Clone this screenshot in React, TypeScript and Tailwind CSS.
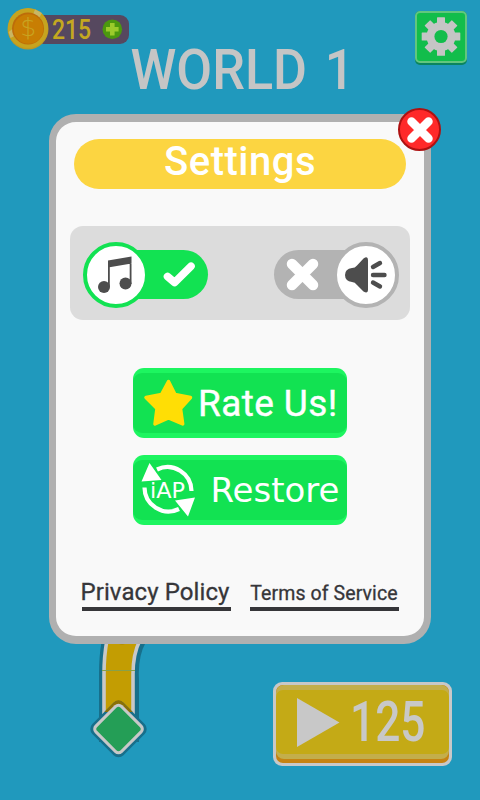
import React from "react";

const din = "font-['Roboto','Liberation_Sans',sans-serif]";

function CoinCounter() {
  return (
    <div className="relative ml-[30px] mt-[15px] flex h-[29px] w-[99px] items-center rounded-r-[9px] bg-[#56485f]">
      <svg className="absolute -left-[23px] -top-[8px]" width="43" height="44" viewBox="0 0 43 44">
        <circle cx="21" cy="22" r="20.5" fill="#bd9a24" />
        <circle cx="21" cy="21" r="20" fill="#c6a41f" />
        <path d="M1.6 25 L3.500 31 L11 27 L8 20Z M28 2.500 L35 6 L30 14 L25 10Z" fill="#c9b663" />
        <circle cx="21" cy="21.500" r="16" fill="#bd6c0a" />
        <circle cx="21.500" cy="22" r="14.800" fill="#c87e03" />
        <text x="21.300" y="29" textAnchor="middle" fontFamily="DejaVu Sans" fontSize="25" className="font-light" fill="#c9a421">$</text>
      </svg>
      <span className={`${din} ml-[22px] w-[38.500px] origin-left scale-x-[0.82] whitespace-nowrap text-[28px] font-medium leading-none text-[#c4a820]`}>215</span>
      <svg className="absolute left-[72px] top-[4px]" width="21" height="21" viewBox="0 0 21 21">
        <circle cx="10.300" cy="10.300" r="9.800" fill="#4b980f" />
        <path d="M8 4h4.600v4h4v4.600h-4v4H8v-4H4V8h4z" fill="#9bcb2b" />
      </svg>
    </div>
  );
}

function GearButton() {
  return (
    <button className="mr-[13px] mt-[11px] flex h-[54px] w-[52px] justify-center rounded-[5px] bg-[#0b855e]">
      <span className="flex h-[52px] w-[52px] items-center justify-center rounded-[5px] border-2 border-[#62c67e] bg-[#12bd4b]">
        <svg width="40" height="40" viewBox="-20 -19.500 40 40">
          <g fill="#c5c5c5">
            {[0, 45, 90, 135].map((a) => (
              <rect key={a} x="-4" y="-19.300" width="8" height="38.600" rx="0.500" transform={`rotate(${a})`} />
            ))}
            <circle r="14.500" />
          </g>
          <circle r="6.600" fill="#12bd4b" />
        </svg>
      </span>
    </button>
  );
}

function Road() {
  return (
    <svg width="80" height="130" viewBox="0 0 80 130">
      <path d="M22.500 102 V34 Q22.500 16 25 2 M55.500 102 V40 Q54 16 63 0" stroke="#176f8b" strokeWidth="7" fill="none" />
      <path d="M24 102 V34 Q24 16 27 0 L60 0 Q53 14 53 34 V102Z" fill="#c39d02" />
      <path d="M24 102 V34 Q24 16 27 0 M53 102 V34 Q53 14 60 0" stroke="#c8c8c8" strokeWidth="3.600" fill="none" />
      <path d="M34 0 Q42 9 50 0" fill="#a48204" />
      <path d="M22 30.500 H55" stroke="#87a04b" strokeWidth="1" />
      <g transform="translate(38.500 89) rotate(45)">
        <rect x="-22" y="-22" width="44" height="44" rx="7" fill="#176f8b" />
        <path d="M-22 -2 V-15 Q-22 -22 -15 -22 H-2Z" fill="#8b7007" />
        <rect x="-19.500" y="-19.500" width="39" height="39" rx="5.500" fill="#c8c8c8" />
        <rect x="-16.500" y="-16.500" width="33" height="33" rx="3" fill="#249e56" />
      </g>
    </svg>
  );
}

function PlayButton() {
  return (
    <button className="mr-[28px] mt-[42px] h-[84px] w-[179px] rounded-[9px] bg-[#c8c8c8] p-[3px]">
      <span className="block h-[78px] rounded-[7px] bg-[#c68311] pb-[4px]">
        <span className="block h-[74px] rounded-[8px] bg-[#c3ae4b] py-[5px]">
          <span className="flex h-[64px] items-center rounded-[7px] bg-[#c4aa16] pl-[20.500px]">
            <svg width="43" height="49" viewBox="0 0 43 49">
              <path d="M0 0 L42.500 24.500 L0 49Z" fill="#c8c8c8" />
            </svg>
            <span className={`${din} ml-[10px] origin-left scale-x-[0.79] text-[56px] font-medium leading-none text-[#c8c8c8]`}>125</span>
          </span>
        </span>
      </span>
    </button>
  );
}

function MusicToggle() {
  return (
    <button className="relative flex h-[49px] w-[118px] items-center justify-end rounded-full bg-[#12e252]">
      <span className="absolute -left-[7px] -top-[8.500px] flex h-[66px] w-[66px] items-center justify-center rounded-full border-[4px] border-[#12e252] bg-white pr-[3px]">
        <svg width="36" height="40" viewBox="0 0 36 40">
          <path d="M11 5.500 L34.500 1.500 V8.500 L11 12.500Z M11 5.500 H12.800 V32 H11Z M32.700 2 H34.500 V29 H32.700Z" fill="#4d4d4d" />
          <circle cx="7" cy="32" r="6" fill="#4d4d4d" />
          <circle cx="28.500" cy="28.500" r="6" fill="#4d4d4d" />
        </svg>
      </span>
      <svg className="mr-[12px]" width="34" height="28" viewBox="0 0 34 28">
        <path d="M5.500 15.500 L12.600 21.500 L29 5.200" stroke="white" strokeWidth="7.600" strokeLinecap="round" strokeLinejoin="round" fill="none" />
      </svg>
    </button>
  );
}

function SoundToggle() {
  return (
    <button className="relative flex h-[49px] w-[118px] items-center rounded-full bg-[#b3b3b3]">
      <svg className="ml-[12px]" width="33" height="33" viewBox="0 0 33 33">
        <path d="M6 6 L27 27 M27 6 L6 27" stroke="white" strokeWidth="10.500" strokeLinecap="round" />
      </svg>
      <span className="absolute -right-[7px] -top-[8.500px] flex h-[66px] w-[66px] items-center justify-center rounded-full border-[4px] border-[#b3b3b3] bg-white">
        <svg width="42" height="38" viewBox="0 0 42 38">
          <path d="M7 12 Q10 12 12 9.500 L18.500 2.500 Q23 -.5 23 4 V34 Q23 38 18.500 35.500 L12 29 Q10 26 7 26 Q0 25 0 19 Q0 13 7 12Z" fill="#4d4d4d" />
          <path d="M28 11 L35 7 M28 19 H39.500 M28 26.500 L35 30.500" stroke="#4d4d4d" strokeWidth="4.400" strokeLinecap="round" />
        </svg>
      </span>
    </button>
  );
}

function GreenButton({ children }: { children: React.ReactNode }) {
  return (
    <button className="flex h-[70px] w-[214px] items-center rounded-[11px] bg-[#1df560] py-[5px]">
      <span className="flex h-[60px] w-full items-center rounded-[9px] bg-[#12e252]">{children}</span>
    </button>
  );
}

function SettingsDialog() {
  return (
    <div className="absolute left-[49px] top-[114px] flex h-[530px] w-[382px] flex-col items-center rounded-[27px] border-x-[7px] border-y-[8px] border-[#b0b0b0] bg-[#f9f9f9]">
      <h2 className={`${din} mt-[17px] flex h-[50px] w-[332px] items-center justify-center rounded-full bg-[#fcd541] pb-[4px] text-[40px] font-medium leading-none tracking-[0.500px] text-white`}>
        Settings
      </h2>
      <div className="mt-[37px] flex h-[94px] w-[340px] items-center justify-between rounded-[13px] bg-[#dcdcdc] pl-[20px] pr-[18px] pt-[3px]">
        <MusicToggle />
        <SoundToggle />
      </div>
      <div className="mt-[48px] flex flex-col gap-[17px]">
        <GreenButton>
          <svg className="ml-[10px]" width="52" height="50" viewBox="0 0 52 50">
            <path d="M25.500 3.500 L32 16.500 L47.500 19.500 L37.500 30.500 L39.700 46 L25.500 40 L12 46 L14 30.500 L3 19.500 L18.500 16.500Z" fill="#ffde05" stroke="#ffde05" strokeWidth="3.500" strokeLinejoin="round" />
          </svg>
          <span className={`${din} ml-[3px] whitespace-nowrap text-[37px] leading-none tracking-[0.400px] text-white [-webkit-text-stroke:0.4px_white]`}>Rate Us!</span>
        </GreenButton>
        <GreenButton>
          <svg className="ml-[8px]" width="56" height="56" viewBox="0 0 56 56">
            <path d="M16 7.500 A24 24 0 0 1 50.500 29 M3.500 25.500 A24 24 0 0 0 38 47" stroke="white" strokeWidth="4.200" fill="none" />
            <path d="M8.500 1 L20.500 18 L.5 19.500Z M54 35.500 L47 54.500 L34 38.500Z" fill="white" />
            <text x="9" y="36" fontFamily="DejaVu Sans" fontSize="22" textLength="35" lengthAdjust="spacingAndGlyphs" fill="white">iAP</text>
          </svg>
          <span className="ml-[13.500px] whitespace-nowrap font-['DejaVu_Sans',sans-serif] text-[34px] leading-none text-white">Restore</span>
        </GreenButton>
      </div>
      <div className={`${din} mt-[52px] flex w-[317px] items-end justify-between text-[#363639]`}>
        <a className="flex h-[34px] w-[149px] items-center justify-center whitespace-nowrap border-b-4 border-[#363639] text-[24px] leading-none tracking-[0.100px] [-webkit-text-stroke:0.3px_#363639]">
          <span className="-ml-[2px]">Privacy Policy</span>
        </a>
        <a className="flex h-[34px] w-[149px] items-center justify-center whitespace-nowrap border-b-4 border-[#363639] pt-[3px] text-[19.500px] leading-none tracking-[0.100px] [-webkit-text-stroke:0.3px_#363639]">Terms of Service</a>
      </div>
      <button className="absolute -right-[17px] -top-[14px] flex h-[43px] w-[43px] items-center justify-center rounded-full border-2 border-[#ad1111] bg-[#ff2929]">
        <svg width="28" height="28" viewBox="0 0 28 28">
          <path d="M5.500 5.500 L22.500 22.500 M22.500 5.500 L5.500 22.500" stroke="white" strokeWidth="8.500" strokeLinecap="round" />
        </svg>
      </button>
    </div>
  );
}

export default function App() {
  return (
    <main className="relative flex h-[800px] w-[480px] flex-col overflow-hidden bg-[#2099bd]">
      <header className="flex h-[46px] items-start justify-between">
        <CoinCounter />
        <GearButton />
      </header>
      <h1 className={`${din} flex h-[48px] items-center justify-center pl-[4px] text-[56px] font-medium leading-none text-[#c5c5c5]`}>
        <span className="scale-x-[0.93] whitespace-nowrap [word-spacing:5px]">WORLD 1</span>
      </h1>
      <section className="mt-[546px] flex items-start justify-between pl-[80px]">
        <Road />
        <PlayButton />
      </section>
      <SettingsDialog />
    </main>
  );
}
